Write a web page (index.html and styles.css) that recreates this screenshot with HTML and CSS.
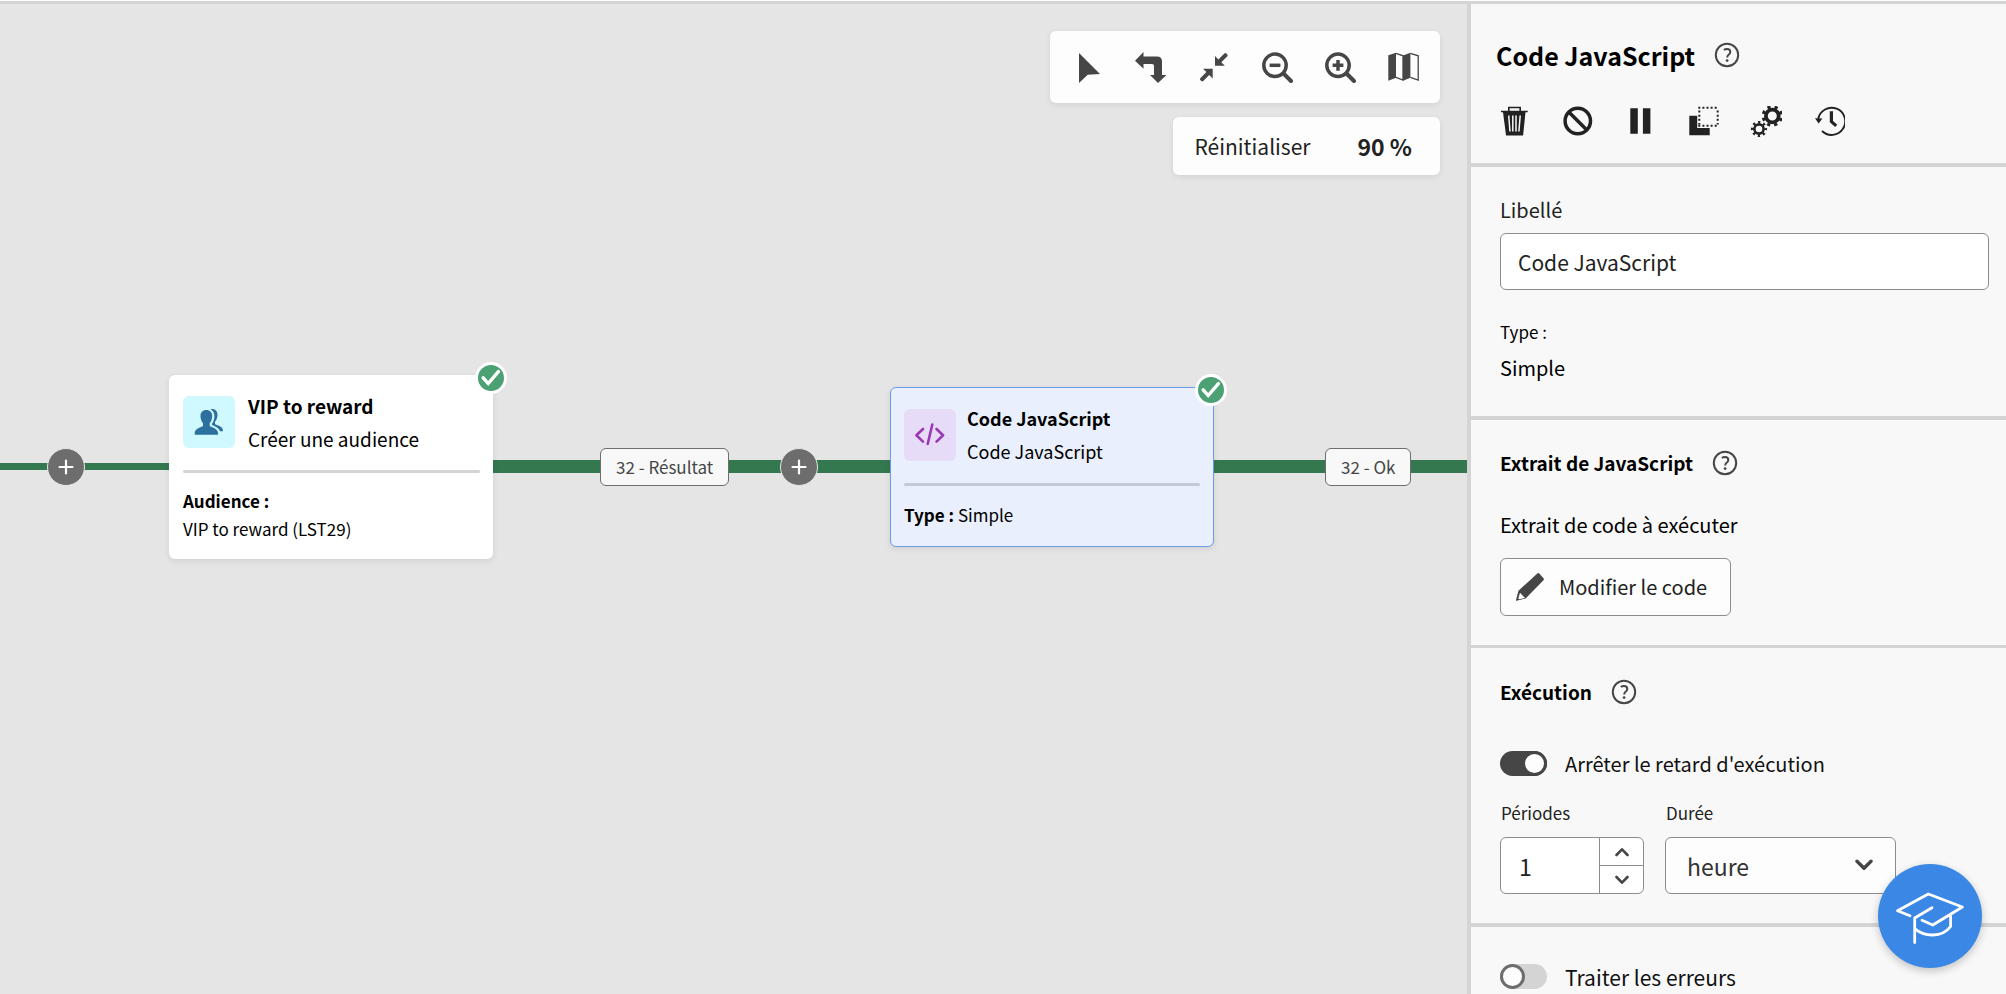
FILE: index.html
```
<!DOCTYPE html>
<html lang="fr">
<head>
<meta charset="utf-8">
<title>Code JavaScript</title>
<link rel="stylesheet" href="styles.css">
</head>
<body>
<svg class="sprite" aria-hidden="true">
  <symbol id="help" viewBox="0 0 26 26">
    <circle cx="13" cy="13" r="11.2" fill="none" stroke="currentColor" stroke-width="2"/>
    <path d="M9.9 8.1q1.2-1.1 3.1-1.1 3.3 0 3.3 2.900 0 1.400-1.500 2.600-1.600 1.200-1.600 2.900" fill="none" stroke="currentColor" stroke-width="2"/>
    <circle cx="13.1" cy="18.600" r="1.400" fill="currentColor"/>
  </symbol>
  <symbol id="plus" viewBox="0 0 36 36">
    <path d="M18 11.500v13M11.500 18h13" stroke="currentColor" stroke-width="2.200" stroke-linecap="round"/>
  </symbol>
  <symbol id="check" viewBox="0 0 32 32">
    <path d="M8.200 15.800l5 5.700L23.400 9.600" fill="none" stroke="currentColor" stroke-width="3.400" stroke-linecap="round"/>
  </symbol>
</svg>

<div class="app">
  <main class="canvas">
    <div class="tools">
      <div class="toolbar" role="toolbar" aria-label="Outils du diagramme">
        <button class="icon-btn" aria-label="Sélectionner"><svg viewBox="0 0 32 32"><path d="M7 2v30l8.700-8.300L28 23z"/></svg></button>
        <button class="icon-btn" aria-label="Orientation"><svg viewBox="0 0 32 32"><path d="M0 9.700L8.500 1v4.600H22q5 0 5 5V24h4.500L23 32l-8-8h4v-9q0-2-2-2H8.500v4.800z"/></svg></button>
        <button class="icon-btn" aria-label="Ajuster"><svg viewBox="0 0 32 32"><path d="M17 5.200l3.200 2.700M17 5v9.800h9.800l-3.500-3.500 6-6q.8-1 0-1.900l-1-1q-1-.8-1.900 0l-6 6zM14.700 27.400v-9.700H5l3.400 3.400-6.100 6.100q-.8 1 0 1.900l1 1q1 .8 1.900 0l6-6.100z"/></svg></button>
        <button class="icon-btn" aria-label="Zoom arrière"><svg viewBox="0 0 32 32" class="line"><circle cx="14" cy="14.300" r="11.200"/><path d="M22.500 22.500l7.500 7.500" stroke-width="4"/><path d="M8.600 14.300h10.800"/></svg></button>
        <button class="icon-btn" aria-label="Zoom avant"><svg viewBox="0 0 32 32" class="line"><circle cx="14" cy="14.300" r="11.200"/><path d="M22.500 22.500l7.500 7.500" stroke-width="4"/><path d="M8.600 14.300h10.800M14 8.900v10.800"/></svg></button>
        <button class="icon-btn" aria-label="Carte"><svg viewBox="0 0 32 32"><path d="M1.300 4.200L9 1.700v25L1.300 29.800zM16 4.400l7.400-2.700v25L16 29.800z"/><path d="M9 2.400l7 2.400v24.300L9 26.300M23.400 2.400l7.800 2.400v24.300l-7.800-2.800" fill="none" stroke="currentColor" stroke-width="1.300"/></svg></button>
      </div>
      <div class="zoombar">
        <button class="reset">Réinitialiser</button>
        <output class="level">90 %</output>
      </div>
    </div>

    <div class="edge edge-in"></div>
    <div class="edge edge-mid"></div>
    <div class="edge edge-out"></div>
    <button class="add add-1" aria-label="Ajouter une activité"><svg><use href="#plus"/></svg></button>
    <button class="add add-2" aria-label="Ajouter une activité"><svg><use href="#plus"/></svg></button>
    <span class="tag tag-1">32 - Résultat</span>
    <span class="tag tag-2">32 - Ok</span>

    <article class="node node-audience">
      <header class="node-head">
        <span class="tile tile-cyan"><svg viewBox="0 0 52 52"><path d="M23.300 14c3.700 0 5.900 2.400 5.900 6 0 3.400-1.200 5.500-2.500 7.300v2.500c0 1.300 8.300 2.200 8.300 7.200v1.700H11.700V37c0-5 8.300-5.900 8.300-7.200v-2.500c-1.300-1.800-2.500-3.900-2.500-7.300 0-3.600 2.200-6 5.800-6z"/><path d="M27.300 13.200c4.500-1.200 7.200 1.600 7.200 5.600 0 3.400-1.100 5.200-2.500 7v2c0 1.300 7.900 2.200 7.900 6.300v1.200H37c-1.200-3.600-4.300-4.700-8-6.300v-1.300c1.600-2.400 2.400-4.600 2.400-7.800 0-3-1.300-5.600-4.100-6.700z"/></svg></span>
        <div>
          <h3 class="node-title">VIP to reward</h3>
          <p class="node-sub">Créer une audience</p>
        </div>
      </header>
      <hr class="rule">
      <p class="node-text"><b>Audience :</b><br>VIP to reward (LST29)</p>
      <span class="badge"><svg><use href="#check"/></svg></span>
    </article>

    <article class="node node-code">
      <header class="node-head">
        <span class="tile tile-violet"><svg viewBox="0 0 52 52" class="code"><path d="M19 20l-6.600 6.300 6.600 6.300M32.500 20l6.600 6.300-6.600 6.300M28.300 15.500l-4.600 19.500"/></svg></span>
        <div>
          <h3 class="node-title">Code JavaScript</h3>
          <p class="node-sub">Code JavaScript</p>
        </div>
      </header>
      <hr class="rule">
      <p class="node-text"><b>Type :</b> Simple</p>
      <span class="badge"><svg><use href="#check"/></svg></span>
    </article>
  </main>

  <aside class="panel">
    <section class="section section-head">
      <div class="heading">
        <h1 class="title">Code JavaScript</h1>
        <button class="help" aria-label="Aide"><svg><use href="#help"/></svg></button>
      </div>
      <div class="actions" role="toolbar" aria-label="Actions">
        <button class="icon-btn" aria-label="Supprimer"><svg viewBox="0 0 32 32"><path d="M5 6h22.500l-2.400 23.500H8z"/><path d="M3 5.500h26.700M10.800 5V1.500h11.400V5" fill="none" stroke="currentColor" stroke-width="1.600"/><path d="M10.700 9.500l1.300 16M14.800 9.500v16M18 9.500v16M22.200 9.500l-1.300 16" stroke="#f8f8f8" stroke-width="1.500"/></svg></button>
        <button class="icon-btn" aria-label="Désactiver"><svg viewBox="0 0 32 32" class="line"><circle cx="16.800" cy="15" r="12.700"/><path d="M7.800 6l18 18" stroke-linecap="butt"/></svg></button>
        <button class="icon-btn" aria-label="Suspendre"><svg viewBox="0 0 32 32"><path d="M6.300 2.300h7.500v25.400H6.300zM18.900 2.300h7.500v25.400h-7.500z"/></svg></button>
        <button class="icon-btn" aria-label="Dupliquer"><svg viewBox="0 0 32 32"><path d="M2.300 9.700h7.900V22h12.500v7.300H2.300z"/><path d="M11.300 1.700h20.500M11.300 19.700h20.500M12.300 4.600v14M30.700 4.600v14" fill="none" stroke="currentColor" stroke-width="2" stroke-dasharray="2 2.100"/></svg></button>
        <button class="icon-btn" aria-label="Paramètres"><svg viewBox="0 0 32 32"><g fill="none" stroke="currentColor"><circle cx="22.300" cy="10" r="6.400" stroke-width="3.800"/><circle cx="22.300" cy="10" r="9.200" stroke-width="3" stroke-dasharray="3.200 4.025" stroke-dashoffset="-2"/><circle cx="9" cy="23" r="4.600" stroke-width="2.600"/><circle cx="9" cy="23" r="6.700" stroke-width="2.800" stroke-dasharray="2.200 3.062" stroke-dashoffset="1.100"/></g></svg></button>
        <button class="icon-btn" aria-label="Historique"><svg viewBox="0 0 32 32"><path d="M5.200 13A13.600 13.600 0 1 1 9 25" fill="none" stroke="currentColor" stroke-width="1.900"/><path d="M2 12.200l7.400.3-3.800 5z"/><path d="M18.400 5.300v10.300l4.800 4.300" fill="none" stroke="currentColor" stroke-width="3.200"/></svg></button>
      </div>
    </section>

    <section class="section section-label">
      <label class="field-label" for="label">Libellé</label>
      <input class="text-input" id="label" type="text" value="Code JavaScript">
      <p class="small">Type :</p>
      <p class="value">Simple</p>
    </section>

    <section class="section section-snippet">
      <div class="heading">
        <h2 class="subtitle">Extrait de JavaScript</h2>
        <button class="help" aria-label="Aide"><svg><use href="#help"/></svg></button>
      </div>
      <p class="value">Extrait de code à exécuter</p>
      <button class="edit"><svg viewBox="0 0 28 28"><path d="M21.300.5q1-.8 2 .1l4.200 4.600q.8 1 0 2L9.600 25.400l-9.200 2.400q-.7 0-.4-.8l2.400-9.200z"/><path d="M4 19.700l5 5.300-5.800 1.300-.9-.9z" fill="#fdfdfd"/></svg>Modifier le code</button>
    </section>

    <section class="section section-run">
      <div class="heading">
        <h2 class="subtitle">Exécution</h2>
        <button class="help" aria-label="Aide"><svg><use href="#help"/></svg></button>
      </div>
      <label class="toggle"><input class="switch" type="checkbox" role="switch" checked>Arrêter le retard d'exécution</label>
      <div class="fields">
        <div class="field field-count">
          <label class="small" for="periods">Périodes</label>
          <div class="stepper">
            <input class="number" id="periods" type="number" value="1">
            <div class="steps">
              <button class="step" aria-label="Augmenter"><svg viewBox="0 0 14 10"><path d="M1.500 8L7 2.300 12.500 8"/></svg></button>
              <button class="step" aria-label="Diminuer"><svg viewBox="0 0 14 10"><path d="M1.500 2L7 7.700 12.500 2"/></svg></button>
            </div>
          </div>
        </div>
        <div class="field field-unit">
          <label class="small" for="unit">Durée</label>
          <div class="picker">
            <select class="select" id="unit"><option>heure</option></select>
            <svg class="chevron" viewBox="0 0 18 12"><path d="M2 2.200l7 7 7-7"/></svg>
          </div>
        </div>
      </div>
    </section>

    <section class="section section-errors">
      <label class="toggle toggle-large"><input class="switch" type="checkbox" role="switch">Traiter les erreurs</label>
    </section>
  </aside>
</div>

<button class="fab" aria-label="Centre d'apprentissage"><svg viewBox="0 0 104 104"><path d="M32 51.700l-12.500-5L50.300 30l34.100 13-29.600 18-10.800-4.700M54 43.700L36.700 54v24.500M36.700 64.500C46 73 64 74 72.600 62.500v-10"/></svg></button>
</body>
</html>
```
FILE: styles.css
```
*, *::before { box-sizing: border-box; }

body {
  margin: 0;
  font-family: "Noto Sans CJK SC", "Noto Sans", sans-serif;
  font-size: 20px;
  line-height: 24px;
  color: #000;
}

h1, h2, h3, p { margin: 0; }

button, input, select {
  font: inherit;
  color: inherit;
}

button {
  padding: 0;
  border: 0;
  background: none;
}

svg { display: block; fill: currentColor; }

.sprite { position: absolute; width: 0; height: 0; }

.app {
  display: grid;
  grid-template-columns: minmax(0, 1fr) 539px;
  height: 100vh;
  padding-top: 1px;
  overflow: hidden;
  background: #fdfdfd;
}

.canvas, .panel { border-top: 3px solid #d4d4d4; overflow: hidden; }

.canvas {
  position: relative;
  background: #e5e5e5;
}

/* Toolbars */
.tools {
  display: flex;
  flex-direction: column;
  align-items: flex-end;
  gap: 14px;
  padding: 27px 27px 0 0;
}

.toolbar, .zoombar {
  display: flex;
  align-items: center;
  border-radius: 6px;
  background: #fdfdfd;
  box-shadow: 0 2px 6px #00000014;
}

.toolbar {
  gap: 31px;
  padding: 20px 21px 20px 22px;
  color: #464646;
}

.zoombar {
  gap: 47px;
  padding: 17px 28px 17px 22px;
  color: #222;
}

.reset { font-size: 21px; }
.level { font-size: 23px; font-weight: 700; }

.icon-btn svg { width: 32px; height: 32px; }

.line {
  fill: none;
  stroke: currentColor;
  stroke-width: 3.5;
  stroke-linecap: round;
}
.line path + path { stroke-linecap: butt; }

/* Diagram */
.edge {
  position: absolute;
  top: 456px;
  height: 13px;
  background: #347850;
}
.edge-in { top: 459px; left: 0; width: 169px; height: 7px; }
.edge-mid { left: 493px; width: 397px; }
.edge-out { left: 1214px; right: 0; }

.add {
  position: absolute;
  top: 444px;
  width: 38px;
  height: 38px;
  border: 1px solid #e5e5e5;
  border-radius: 50%;
  background: #6d6d6d;
  color: #fff;
}
.add svg { width: 36px; height: 36px; }
.add-1 { left: 47px; }
.add-2 { left: 780px; }

.tag {
  position: absolute;
  top: 444px;
  padding: 6px 15px;
  border: 1px solid #6d6d6d;
  border-radius: 6px;
  background: #f8f8f8;
  color: #464646;
  font-size: 17px;
}
.tag-1 { left: 600px; }
.tag-2 { left: 1325px; }

.node {
  position: absolute;
  width: 324px;
  padding: 14px 13px 16px 14px;
  border-radius: 6px;
  background: #fff;
  box-shadow: 0 2px 6px #00000018;
}
.node-audience { left: 169px; top: 371px; font-size: 19px; }
.node-code {
  left: 890px;
  top: 383px;
  padding: 14px 13px 17px;
  border: 1px solid #6b9bea;
  background: #e9effc;
  font-size: 18px;
}

.node-head {
  display: flex;
  align-items: center;
  gap: 13px;
  line-height: 33px;
}
.node-code .node-head { gap: 11px; }

.node-title { font-size: inherit; }

.tile {
  width: 52px;
  height: 52px;
  border-radius: 6px;
}
.tile-cyan { background: #cff8ff; color: #2d6f9f; }
.tile-violet { background: #e7dcf8; color: #9c38b8; }

.code {
  fill: none;
  stroke: currentColor;
  stroke-width: 2.6;
  stroke-linecap: round;
  stroke-linejoin: round;
}

.rule {
  height: 3px;
  margin: 15px 0 14px;
  border: 0;
  border-radius: 2px;
  background: #d4d4d4;
}
.node-code .rule { margin-bottom: 15px; background: #c3cad5; }

.node-text { font-size: 17px; line-height: 28px; }

.badge {
  position: absolute;
  top: -13px;
  right: -14px;
  width: 32px;
  height: 32px;
  border: 3px solid #fff;
  border-radius: 50%;
  background: #4ba173;
  color: #fff;
}
.node-code .badge { top: -14px; }
.badge svg { width: 32px; height: 32px; margin: -3px; }

/* Side panel */
.panel {
  border-left: 4px solid #d4d4d4;
  background: #f8f8f8;
}

.section {
  padding: 0 17px 0 29px;
  border-bottom: 4px solid #d4d4d4;
}

.heading { display: flex; align-items: center; gap: 19px; }

.help { color: #464646; }
.help svg { width: 26px; height: 26px; margin: -1px 0; }

.section-head { padding: 35px 17px 25px 25px; }
.title { font-size: 25px; line-height: 32px; }

.actions {
  display: flex;
  gap: 31px;
  margin-top: 35px;
  padding-left: 2px;
  color: #222;
}

.section-label { padding-top: 31px; padding-bottom: 36px; }
.field-label { display: block; color: #222; }

.small { font-size: 17px; }
.section-label .small { margin-top: 30px; }
.section-label .value { margin-top: 12px; }

.text-input, .edit, .stepper, .select {
  height: 57px;
  border: 1px solid #8c8c8c;
  border-radius: 6px;
  background: #fff;
}

.text-input {
  display: block;
  width: 100%;
  margin-top: 11px;
  padding: 0 17px;
  font-size: 21px;
  color: #222;
}

.section-snippet {
  padding-top: 31px;
  padding-bottom: 29px;
  border-bottom-width: 3px;
}
.subtitle { font-size: 19px; line-height: 24px; }
.section-snippet .value { margin-top: 38px; }

.edit {
  display: flex;
  align-items: center;
  gap: 15px;
  height: 58px;
  margin-top: 21px;
  padding: 0 23px 0 15px;
  background: #fdfdfd;
  color: #222;
}
.edit svg { width: 28px; height: 28px; color: #464646; }

.section-run { padding-top: 32px; padding-bottom: 29px; }

.toggle {
  display: flex;
  align-items: center;
  gap: 18px;
  height: 25px;
  color: #111;
}
.section-run .toggle { margin-top: 47px; }
.toggle-large { font-size: 21px; }

.switch {
  display: flex;
  align-items: center;
  width: 47px;
  height: 25px;
  margin: 0;
  border-radius: 13px;
  background: #d4d4d4;
  appearance: none;
}
.switch::before {
  content: "";
  width: 25px;
  height: 25px;
  border: 3px solid #6d6d6d;
  border-radius: 50%;
  background: #fdfdfd;
}
.switch:checked { justify-content: flex-end; background: #464646; }
.switch:checked::before { border-color: #464646; }

.fields { display: flex; gap: 21px; margin-top: 25px; }

.field {
  display: flex;
  flex-direction: column;
  gap: 12px;
  color: #222;
}
.field .small { padding-left: 1px; }
.field-count { width: 144px; }
.field-unit { width: 231px; }

.stepper { display: flex; overflow: hidden; }

.number {
  flex: 1;
  min-width: 0;
  padding: 0 18px;
  border: 0;
  background: none;
  font-size: 23px;
  appearance: textfield;
}
.number::-webkit-inner-spin-button { appearance: none; margin: 0; }

.steps {
  display: flex;
  flex-direction: column;
  width: 44px;
  border-left: 1px solid #8c8c8c;
}
.step {
  flex: 1;
  display: flex;
  align-items: center;
  justify-content: center;
}
.step + .step { border-top: 1px solid #8c8c8c; }
.step svg, .chevron {
  fill: none;
  stroke: #464646;
  stroke-width: 2.6;
  stroke-linecap: round;
  stroke-linejoin: round;
}
.step svg { width: 14px; height: 10px; }

.picker { position: relative; }
.select {
  display: block;
  width: 100%;
  padding: 0 21px;
  font-size: 23px;
  color: #333;
  background: #fdfdfd;
  appearance: none;
}
.chevron {
  position: absolute;
  top: 22px;
  right: 23px;
  width: 18px;
  height: 12px;
  stroke-width: 3.4;
  pointer-events: none;
}

.section-errors { padding-top: 37px; border-bottom: 0; }

.fab {
  position: fixed;
  right: 24px;
  bottom: 26px;
  width: 104px;
  height: 104px;
  border-radius: 50%;
  background: #3a87e6;
  box-shadow: 0 3px 8px #00000038;
  color: #fff;
}
.fab svg {
  fill: none;
  stroke: currentColor;
  stroke-width: 2.8;
  stroke-linecap: round;
  stroke-linejoin: round;
}
```
